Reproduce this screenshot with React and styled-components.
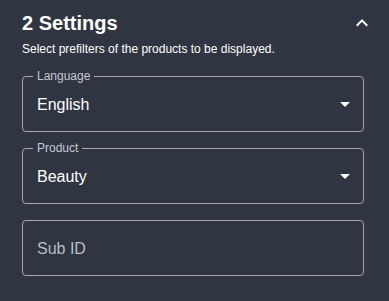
import styled, { createGlobalStyle } from "styled-components";

const BG = "#2f3541";

const GlobalStyle = createGlobalStyle`
  body {
    margin: 0;
    background: ${BG};
    font-family: "Liberation Sans", Arial, sans-serif;
  }
`;

const Panel = styled.section`
  width: 389px;
  height: 301px;
  box-sizing: border-box;
  padding: 11px 25px 0 22px;
  background: ${BG};
  color: #fff;
`;

const Header = styled.div`
  display: flex;
  align-items: center;
  justify-content: space-between;
  height: 24px;
`;

const Title = styled.h2`
  margin: 0;
  font-size: 20px;
  line-height: 24px;
  font-weight: 700;
`;

const Toggle = styled.button`
  display: flex;
  padding: 0;
  margin-right: -10px;
  border: 0;
  background: none;
  color: #fff;
  cursor: pointer;
`;

const Subtitle = styled.p`
  margin: 6px 0 0;
  font-size: 12px;
  line-height: 16px;
`;

const Fields = styled.div`
  display: flex;
  flex-direction: column;
  gap: 16px;
  margin-top: 19px;
`;

const Field = styled.div`
  position: relative;
  display: flex;
  align-items: center;
  height: 56px;
  box-sizing: border-box;
  padding: 0 14px;
  border: 1px solid #a3a8b0;
  border-radius: 4px;
`;

const Label = styled.span`
  position: absolute;
  top: -9px;
  left: 10px;
  padding: 0 4px;
  background: ${BG};
  color: #c6cad1;
  font-size: 12px;
  line-height: 16px;
`;

const Value = styled.span`
  flex: 1;
  font-size: 16px;
  line-height: 19px;
  color: ${({ $placeholder }) => ($placeholder ? "#b9bec6" : "#fff")};
`;

const Caret = styled.svg`
  position: absolute;
  right: 6px;
  top: 15px;
  width: 24px;
  height: 24px;
  fill: #fff;
`;

function ExpandLess() {
  return (
    <svg width="24" height="24" viewBox="0 0 24 24" fill="currentColor">
      <path d="M12 8l-6 6 1.41 1.41L12 10.83l4.59 4.58L18 14z" />
    </svg>
  );
}

function SelectField({ label, value }) {
  return (
    <Field>
      <Label>{label}</Label>
      <Value>{value}</Value>
      <Caret viewBox="0 0 24 24">
        <path d="M7 10l5 5 5-5z" />
      </Caret>
    </Field>
  );
}

export default function App() {
  return (
    <>
      <GlobalStyle />
      <Panel>
        <Header>
          <Title>2 Settings</Title>
          <Toggle aria-label="collapse">
            <ExpandLess />
          </Toggle>
        </Header>
        <Subtitle>Select prefilters of the products to be displayed.</Subtitle>
        <Fields>
          <SelectField label="Language" value="English" />
          <SelectField label="Product" value="Beauty" />
          <Field>
            <Value $placeholder>Sub ID</Value>
          </Field>
        </Fields>
      </Panel>
    </>
  );
}
